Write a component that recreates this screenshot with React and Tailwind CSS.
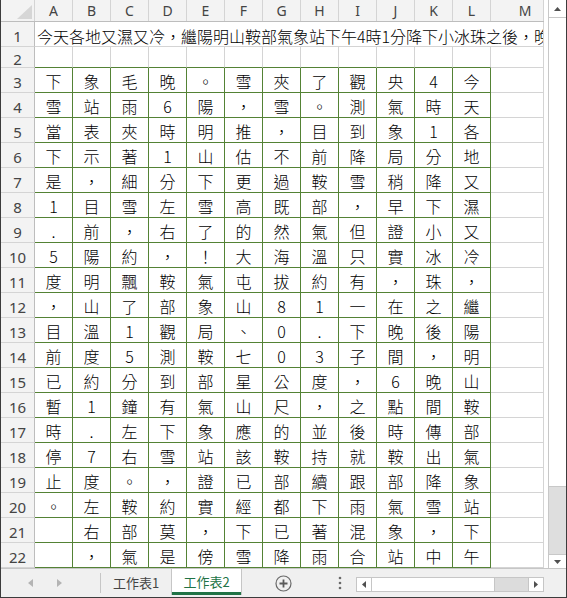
import React from "react";

const COLS = ["A", "B", "C", "D", "E", "F", "G", "H", "I", "J", "K", "L"];

// rows 3..22, "_" = empty cell
const ROWS = [
  "下象毛晚。雪夾了觀央4今",
  "雪站雨6陽，雪。測氣時天",
  "當表夾時明推，目到象1各",
  "下示著1山估不前降局分地",
  "是，細分下更過鞍雪稍降又",
  "1目雪左雪高既部，早下濕",
  ".前，右了的然氣但證小又",
  "5陽約，！大海溫只實冰冷",
  "度明飄鞍氣屯拔約有，珠，",
  "，山了部象山81一在之繼",
  "目溫1觀局、0.下晚後陽",
  "前度5測鞍七03子間，明",
  "已約分到部星公度，6晚山",
  "暫1鐘有氣山尺，之點間鞍",
  "時.左下象應的並後時傳部",
  "停7右雪站該鞍持就鞍出氣",
  "止度。，證已部續跟部降象",
  "。左鞍約實經都下雨氣雪站",
  "_右部莫，下已著混象，下",
  "_，氣是傍雪降雨合站中午",
];

const TITLE = "今天各地又濕又冷，繼陽明山鞍部氣象站下午4時1分降下小冰珠之後，晚間";

function RowHead({ n, h }) {
  return (
    <div
      className={`w-[34px] ${h} shrink-0 bg-[#f3f3f3] border-r border-b border-r-[#bdbdbd] border-b-[#d4d4d4] flex items-center justify-center pt-[5px] text-[15px] leading-none text-[#444] font-['Noto_Sans',sans-serif]`}
    >
      {n}
    </div>
  );
}

function Sheet() {
  return (
    <div className="flex flex-col w-[543px]">
      {/* column headers */}
      <div className="flex h-[22px] bg-[#f3f3f3] border-b border-[#bdbdbd]">
        <div className="w-[34px] shrink-0 border-r border-[#d4d4d4] relative">
          <svg className="absolute right-[2px] bottom-[2px]" width="15" height="14" viewBox="0 0 15 14">
            <polygon points="15,0 15,14 0,14" fill="#d6d6d6" />
          </svg>
        </div>
        {COLS.map((c) => (
          <div
            key={c}
            className="w-[38px] shrink-0 border-r border-[#d4d4d4] flex items-center justify-center text-[14px] leading-none text-[#444] font-['Noto_Sans',sans-serif]"
          >
            {c}
          </div>
        ))}
        <div className="w-[53px] shrink-0 border-r border-[#d4d4d4] flex items-center justify-center pl-[16px] text-[14px] leading-none text-[#444] font-['Noto_Sans',sans-serif]">
          M
        </div>
      </div>

      {/* row 1 */}
      <div className="flex h-[25px]">
        <RowHead n={1} h="h-[25px]" />
        <div className="w-[509px] shrink-0 border-r border-b border-[#d4d4d4] overflow-hidden whitespace-nowrap flex items-center pl-[2px] pt-[4px] text-[16px] leading-none font-light text-black">
          {TITLE}
        </div>
      </div>

      {/* row 2 */}
      <div className="flex h-[21px]">
        <RowHead n={2} h="h-[21px]" />
        {COLS.map((c) => (
          <div key={c} className="w-[38px] shrink-0 border-r border-b border-r-[#d4d4d4] border-b-[#548235]" />
        ))}
        <div className="w-[53px] shrink-0 border-r border-b border-[#d4d4d4]" />
      </div>

      {/* rows 3..22 */}
      {ROWS.map((r, i) => (
        <div key={i} className="flex h-[25px]">
          <RowHead n={i + 3} h="h-[25px]" />
          {Array.from(r).map((ch, j) => (
            <div
              key={j}
              className="w-[38px] shrink-0 border-r border-b border-[#548235] flex items-center justify-center pt-[2px] text-[16px] leading-none font-light text-black"
            >
              {ch === "_" ? "" : ch}
            </div>
          ))}
          <div className="w-[53px] shrink-0 border-r border-b border-[#d4d4d4]" />
        </div>
      ))}
    </div>
  );
}

function VScroll() {
  return (
    <div className="w-[22px] bg-white flex justify-end">
      <div className="w-[18px] border-l border-[#c8c8c8] bg-[#dedede] flex flex-col">
        <div className="h-[18px] bg-white border-b border-[#c8c8c8] flex items-center justify-center">
          <svg width="7" height="4" viewBox="0 0 7 4">
            <polygon points="0,4 7,4 3.5,0" fill="#505050" />
          </svg>
        </div>
        <div className="h-[469px] bg-white border-b border-[#c8c8c8]" />
        <div className="flex-1" />
        <div className="h-[14px] bg-white border-t border-[#c8c8c8] flex items-center justify-center">
          <svg width="7" height="4" viewBox="0 0 7 4">
            <polygon points="0,0 7,0 3.5,4" fill="#505050" />
          </svg>
        </div>
      </div>
    </div>
  );
}

function TabBar() {
  return (
    <div className="h-[29px] bg-[#f0f0f0] border-t border-[#c6c6c6] flex text-[13px] leading-none">
      <div className="w-[99px] shrink-0 flex items-center">
        <svg className="ml-[27px]" width="5" height="8" viewBox="0 0 5 8">
          <polygon points="5,0 5,8 0,4" fill="#b4b4b4" />
        </svg>
        <svg className="ml-[24px]" width="5" height="8" viewBox="0 0 5 8">
          <polygon points="0,0 0,8 5,4" fill="#b4b4b4" />
        </svg>
      </div>
      <div className="w-px shrink-0 bg-[#c6c6c6] my-[4px]" />
      <div className="w-[70px] shrink-0 flex items-center justify-center pb-[1px] text-[#444]">工作表1</div>
      <div className="w-[71px] shrink-0 mb-[2px] bg-white border-x border-[#c6c6c6] relative flex items-center justify-center pb-[1px] text-[#217346]">
        工作表2
        <div className="absolute left-0 right-0 bottom-0 h-[3px] bg-[#217346]" />
      </div>
      <div className="flex items-center ml-[33px]">
        <svg width="17" height="17" viewBox="0 0 17 17">
          <circle cx="8.5" cy="8.5" r="7.5" fill="none" stroke="#6a6a6a" strokeWidth="1.2" />
          <path d="M4.5 8.5h8M8.5 4.5v8" stroke="#5a5a5a" strokeWidth="1.8" />
        </svg>
      </div>
      <div className="flex items-center ml-[46px]">
        <svg width="4" height="14" viewBox="0 0 4 14">
          <circle cx="2" cy="2" r="1.3" fill="#6a6a6a" />
          <circle cx="2" cy="7" r="1.3" fill="#6a6a6a" />
          <circle cx="2" cy="12" r="1.3" fill="#6a6a6a" />
        </svg>
      </div>
      <div className="ml-[14px] mt-[8px] w-[188px] h-[15px] border border-[#c6c6c6] bg-[#dcdcdc] flex">
        <div className="w-[15px] bg-white border-r border-[#c6c6c6] flex items-center justify-center">
          <svg width="4" height="7" viewBox="0 0 4 7">
            <polygon points="4,0 4,7 0,3.5" fill="#505050" />
          </svg>
        </div>
        <div className="w-[123px] bg-white border-r border-[#c6c6c6]" />
        <div className="flex-1" />
        <div className="w-[15px] bg-white border-l border-[#c6c6c6] flex items-center justify-center">
          <svg width="4" height="7" viewBox="0 0 4 7">
            <polygon points="0,0 0,7 4,3.5" fill="#505050" />
          </svg>
        </div>
      </div>
    </div>
  );
}

export default function App() {
  return (
    <div className="w-[567px] h-[598px] bg-white border-x border-b border-[#3c3c3c] flex flex-col overflow-hidden font-['Noto_Sans_CJK_TC',sans-serif]">
      <div className="flex h-[568px] shrink-0">
        <Sheet />
        <VScroll />
      </div>
      <TabBar />
    </div>
  );
}
